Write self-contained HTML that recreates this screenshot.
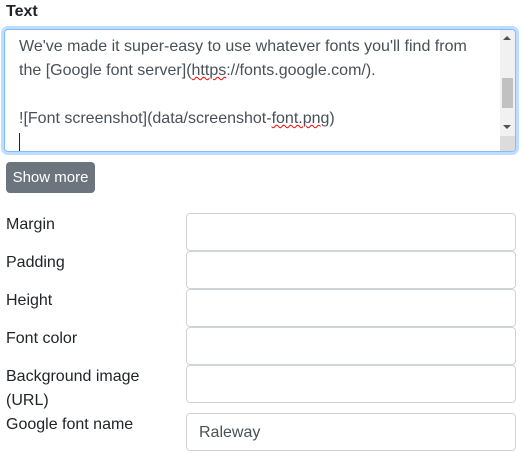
<!DOCTYPE html>
<html><head><style>
body{margin:0;width:522px;height:454px;background:#fff;font-family:"Liberation Sans",sans-serif;font-size:16px;color:#212529;position:relative;overflow:hidden}
.a{position:absolute}
.lbl{left:6px;line-height:24px}
.inp{left:186px;width:328px;height:36px;border:1px solid #ced4da;border-radius:4px;background:#fff}
</style></head><body>
<div class="a" style="left:6px;top:1px;line-height:22px;font-weight:bold">Text</div>
<div class="a" style="left:4px;top:29px;width:510px;height:121px;border:1px solid #80bdff;border-radius:4px;box-shadow:0 0 0 3px rgba(128,189,255,0.5);overflow:hidden;background:#fff">
 <div class="a" style="left:14px;top:5px;line-height:24px;color:#495057;white-space:pre">We've made it super-easy to use whatever fonts you'll find from
the [Google font server](<span style="text-decoration:underline wavy red;text-decoration-thickness:1px">https</span>://fonts.google.com/).

![Font screenshot](data/screenshot-<span style="text-decoration:underline wavy red;text-decoration-thickness:1px">font.png</span>)</div>
 <div class="a" style="left:14px;top:103px;width:1px;height:18px;background:#222"></div>
 <div class="a" style="left:495px;top:0;width:15px;height:106px;background:#f1f1f1"></div>
 <div class="a" style="left:497px;top:48px;width:11px;height:30px;background:#c1c1c1"></div>
 <div class="a" style="left:498px;top:6px;width:0;height:0;border-left:4px solid transparent;border-right:4px solid transparent;border-bottom:4px solid #505050"></div>
 <div class="a" style="left:498px;top:95px;width:0;height:0;border-left:4px solid transparent;border-right:4px solid transparent;border-top:4px solid #505050"></div>
 <div class="a" style="left:495px;top:106px;width:15px;height:15px;background:#dcdcdc"></div>
</div>
<div class="a" style="left:6px;top:162px;width:89px;height:31px;background:#6c757d;border-radius:4px;color:#fff;font-size:15px;line-height:31px;text-align:center">Show more</div>
<div class="a lbl" style="top:213px">Margin</div>
<div class="a lbl" style="top:251px">Padding</div>
<div class="a lbl" style="top:289px">Height</div>
<div class="a lbl" style="top:327px">Font color</div>
<div class="a lbl" style="top:365px">Background image<br>(URL)</div>
<div class="a lbl" style="top:413px">Google font name</div>
<div class="a inp" style="top:213px"></div>
<div class="a inp" style="top:251px"></div>
<div class="a inp" style="top:289px"></div>
<div class="a inp" style="top:327px"></div>
<div class="a inp" style="top:365px"></div>
<div class="a inp" style="top:413px;color:#495057;line-height:37px;text-indent:12px">Raleway</div>
</body></html>
